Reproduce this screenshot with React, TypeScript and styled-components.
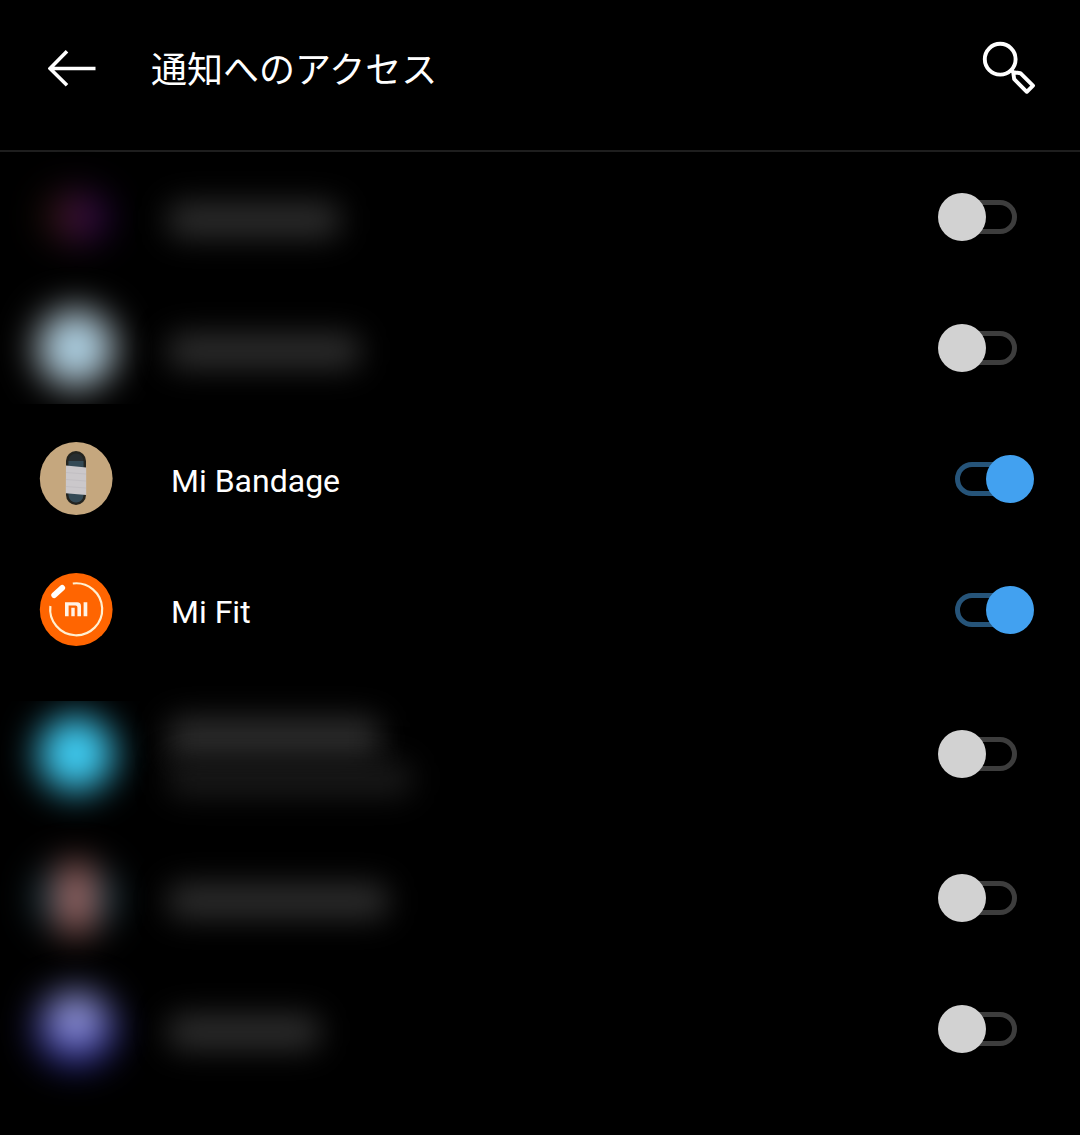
import React, { useState } from "react";
import styled, { createGlobalStyle } from "styled-components";

const GlobalStyle = createGlobalStyle`
  *, *::before, *::after { box-sizing: border-box; }
  body {
    margin: 0;
    background: #000;
    color: #fff;
    font-family: Roboto, "Noto Sans CJK JP", sans-serif;
  }
`;

const Page = styled.div`
  min-height: 100vh;
  background: #000;
`;

const Header = styled.header`
  display: flex;
  align-items: center;
  height: 152px;
  padding: 0 44px 14px 48px;
  border-bottom: 2px solid #1e1e1e;
`;

const IconButton = styled.button`
  display: flex;
  padding: 0;
  border: 0;
  background: none;
  color: #fff;
  cursor: pointer;

  svg {
    display: block;
    fill: none;
    stroke: currentColor;
  }
`;

const Title = styled.h1`
  flex: 1;
  margin: 0;
  padding: 6px 0 0 55px;
  font-size: 36px;
  line-height: 52px;
  font-weight: 400;
`;

const List = styled.ul`
  margin: 0;
  padding: 0;
  list-style: none;
`;

const Row = styled.li<{ $tall?: boolean }>`
  display: flex;
  align-items: center;
  height: ${(p) => (p.$tall ? 157 : 131)}px;
  padding: 0 46px 1px 0;
`;

const IconFrame = styled.span<{ $clip?: string }>`
  display: flex;
  flex: none;
  align-self: stretch;
  align-items: center;
  justify-content: center;
  width: 152px;
  clip-path: ${(p) => p.$clip ?? "none"};

  svg {
    display: block;
  }
`;

const BlurredIcon = styled.span<{ $fill: string; $width: number; $height: number }>`
  width: ${(p) => p.$width}px;
  height: ${(p) => p.$height}px;
  border-radius: 50%;
  background: ${(p) => p.$fill};
  filter: blur(18px);
`;

const Name = styled.label`
  flex: 1;
  padding: 4px 0 0 19px;
  font-size: 32px;
  line-height: 40px;
`;

const HiddenName = styled.span`
  display: flex;
  flex: 1;
  flex-direction: column;
  padding: 6px 0 0 16px;
`;

const Smudge = styled.span<{ $width: number; $height?: number; $faint?: boolean }>`
  width: ${(p) => p.$width}px;
  height: ${(p) => p.$height ?? 36}px;
  border-radius: 12px;
  background: ${(p) => (p.$faint ? "#191919" : "#2c2c2c")};
  filter: blur(15px);
`;

const Switch = styled.input`
  display: grid;
  flex: none;
  align-items: center;
  width: 96px;
  height: 48px;
  margin: 0;
  appearance: none;
  cursor: pointer;

  &::before,
  &::after {
    content: "";
    grid-area: 1 / 1;
  }
  &::before {
    justify-self: center;
    width: 62px;
    height: 34px;
    border: 5px solid #3d3d3d;
    border-radius: 17px;
  }
  &::after {
    width: 48px;
    height: 48px;
    border-radius: 50%;
    background: #d2d2d2;
  }
  &:checked::before {
    border-color: #265479;
  }
  &:checked::after {
    justify-self: end;
    background: #42a1f0;
  }
`;

const BackIcon = () => (
  <svg width="48" height="38" viewBox="0 0 48 38" strokeWidth="3.6" aria-hidden="true">
    <path d="M47.5 19.5H3M19 2.3 2 19.5 19 36.2" />
  </svg>
);

const SearchIcon = () => (
  <svg width="54" height="54" viewBox="0 0 54 54" strokeWidth="3.9" strokeLinejoin="round" aria-hidden="true">
    <circle cx="18.2" cy="18.2" r="15.4" />
    <path d="M29.2 29.2 31.2 31.2 38.4 32.2 51 44.6 44.8 50.8 32.2 38.2 31.2 31.2" />
  </svg>
);

const BandageIcon = () => (
  <svg width="74" height="74" viewBox="-1 0 74 74" aria-hidden="true">
    <circle cx="36.2" cy="36.5" r="36.4" fill="#c5a77e" />
    <rect x="26" y="9" width="20" height="54" rx="10" fill="#24241f" />
    <rect x="28.5" y="11.5" width="15" height="49" rx="7.5" fill="#272d30" />
    <path d="M28.5 19H43.5V53A7.5 7.5 0 0 1 28.5 53Z" fill="#344a56" />
    <path d="M26 23.6 46.2 25.6V53L25.8 51.2Z" fill="#cbc8cb" />
    <path d="M26 30.5 46 32M26 37.5 46 39M26 44.5 46 46" stroke="#c2bfc3" fill="none" />
  </svg>
);

const FitIcon = () => (
  <svg width="74" height="74" viewBox="-1 0 74 74" aria-hidden="true">
    <circle cx="36.2" cy="36.5" r="36.4" fill="#ff6501" />
    <path d="M32.8 10.5A26 26 0 1 1 10.4 33" fill="none" stroke="#fff0d2" strokeWidth="2.2" />
    <path d="M14.2 22.2 22.2 14.9" stroke="#fff" strokeWidth="5.8" strokeLinecap="round" />
    <path
      d="M25 43.3V29.3H37.1Q41 29.3 41 33.2V43.3H37.4V34.2Q37.4 32.4 35.6 32.4H28.6V43.3ZM31.3 34.8H34.7V43.3H31.3ZM43.6 29.3H47.3V43.3H43.6Z"
      fill="#fff3e6"
    />
  </svg>
);

type App = {
  id: string;
  name?: string;
  icon: React.ReactNode;
  clip?: string;
  lines?: number[];
  enabled: boolean;
};

const apps: App[] = [
  {
    id: "app-1",
    icon: (
      <BlurredIcon
        $width={72}
        $height={50}
        $fill="linear-gradient(90deg, #1e1206 10%, #44142a 44%, #40104c 58%, #1c0234 90%)"
      />
    ),
    lines: [172],
    enabled: false,
  },
  {
    id: "app-2",
    icon: <BlurredIcon $width={80} $height={80} $fill="radial-gradient(#a8d2e8 35%, #b4b0ae 70%)" />,
    clip: "inset(-30px 0 9px 0)",
    lines: [192],
    enabled: false,
  },
  { id: "mi-bandage", name: "Mi Bandage", icon: <BandageIcon />, enabled: true },
  { id: "mi-fit", name: "Mi Fit", icon: <FitIcon />, enabled: true },
  {
    id: "app-5",
    icon: <BlurredIcon $width={76} $height={76} $fill="#40ceF4" />,
    clip: "inset(25px 0 -30px 0)",
    lines: [212, 244],
    enabled: false,
  },
  {
    id: "app-6",
    icon: (
      <BlurredIcon
        $width={80}
        $height={70}
        $fill="linear-gradient(90deg, #2c4a56 30%, #bc6860 36%, #bc6860 64%, #2c4a56 70%)"
      />
    ),
    lines: [220],
    enabled: false,
  },
  {
    id: "app-7",
    icon: (
      <BlurredIcon
        $width={82}
        $height={76}
        $fill="radial-gradient(circle at 50% 36%, #9a9edc 28%, #202088 60%)"
      />
    ),
    lines: [152],
    enabled: false,
  },
];

export default function NotificationAccess() {
  const [enabled, setEnabled] = useState<Record<string, boolean>>(() =>
    Object.fromEntries(apps.map((a) => [a.id, a.enabled]))
  );
  const toggle = (id: string) => setEnabled((s) => ({ ...s, [id]: !s[id] }));

  return (
    <Page>
      <GlobalStyle />
      <Header>
        <IconButton type="button" aria-label="戻る">
          <BackIcon />
        </IconButton>
        <Title lang="ja">通知へのアクセス</Title>
        <IconButton type="button" aria-label="検索">
          <SearchIcon />
        </IconButton>
      </Header>
      <List>
        {apps.map((app) => {
          const tall = (app.lines?.length ?? 0) > 1;
          return (
            <Row key={app.id} $tall={tall}>
              <IconFrame $clip={app.clip}>{app.icon}</IconFrame>
              {app.name ? (
                <Name htmlFor={app.id}>{app.name}</Name>
              ) : (
                <HiddenName>
                  {app.lines?.map((width, i) => (
                    <Smudge key={i} $width={width} $height={tall && i === 0 ? 44 : 36} $faint={i > 0} />
                  ))}
                </HiddenName>
              )}
              <Switch
                id={app.id}
                type="checkbox"
                role="switch"
                aria-label={app.name ?? "非公開のアプリ"}
                checked={enabled[app.id]}
                onChange={() => toggle(app.id)}
              />
            </Row>
          );
        })}
      </List>
    </Page>
  );
}
